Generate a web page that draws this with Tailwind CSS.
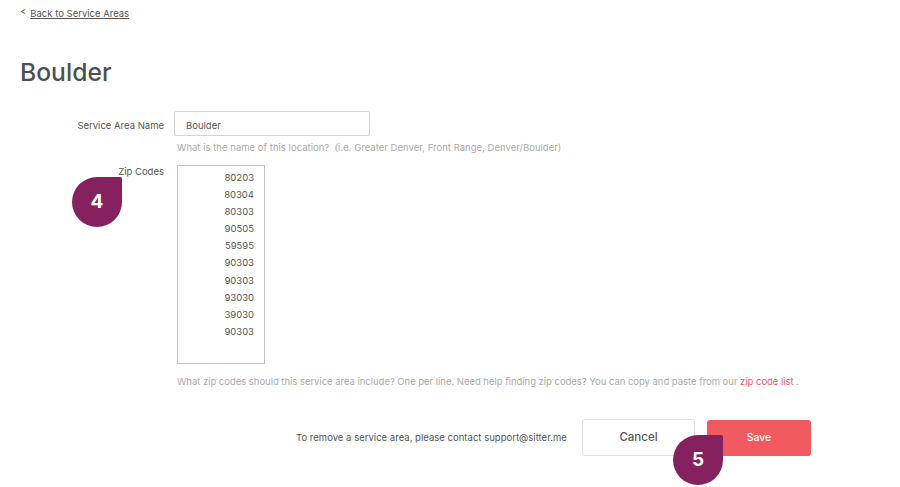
<!DOCTYPE html>
<html>
<head>
<meta charset="utf-8">
<script src="https://cdn.jsdelivr.net/npm/@tailwindcss/browser@4"></script>
</head>
<body class="bg-white">
<div class="relative w-[900px] h-[487px] overflow-hidden font-['Inter',sans-serif] text-[#555555]">
  <div class="flex items-center h-[14px] mt-[7px] ml-5 text-[9.5px] gap-[4px]">
    <span class="-mt-[3px]">&lt;</span>
    <a class="underline">Back to Service Areas</a>
  </div>
  <h1 class="ml-5 mt-[34px] text-[24.7px] leading-[34px] font-medium text-[#4f4f4f]">Boulder</h1>
  <div class="flex mt-[22px]">
    <label class="w-[164px] text-right text-[9.5px] leading-[29px]">Service Area Name</label>
    <div class="ml-[10px]">
      <input value="Boulder" class="block w-[196px] h-[25px] px-[11px] pt-[3px] border border-[#d4d4d4] rounded-[2px] text-[9.5px] text-[#555555] bg-white">
      <p class="ml-[3px] mt-[6px] text-[9.5px] leading-[12px] tracking-[0.02px] text-[#aaaaaa] whitespace-nowrap">What is the name of this location?&nbsp; (i.e. Greater Denver, Front Range, Denver/Boulder)</p>
    </div>
  </div>
  <div class="flex mt-[11px]">
    <label class="w-[164px] text-right text-[9.5px] leading-[14px]">Zip Codes</label>
    <div class="ml-[13px]">
      <textarea class="block w-[88px] h-[199px] resize-none overflow-hidden border border-[#c4c4c4] pt-[3px] pr-[10px] text-right text-[9.5px] leading-[17.1px] text-[#555555]">80203
80304
80303
90505
59595
90303
90303
93030
39030
90303</textarea>
      <p class="mt-[12px] whitespace-nowrap text-[9.5px] leading-[12px] tracking-[-0.03px] text-[#aaaaaa]">What zip codes should this service area include? One per line. Need help finding zip codes? You can copy and paste from our <a class="text-[#f0595f]">zip code list</a> .</p>
    </div>
  </div>
  <div class="flex items-center mt-[32px]">
    <p class="ml-[296px] w-[286px] mt-[1px] text-[9.5px] tracking-[0.02px] whitespace-nowrap">To remove a service area, please contact support@sitter.me</p>
    <button class="w-[113px] h-[37px] border border-[#e2e2e2] rounded-[3px] bg-white text-[11.5px] font-medium text-[#555555] -mt-[1px]">Cancel</button>
    <button class="ml-[12px] w-[104px] h-[36px] rounded-[3px] bg-[#f0595f] text-[10.5px] font-medium text-white">Save</button>
  </div>
  <div class="absolute left-[72px] top-[177px] w-[50px] h-[50px] flex items-center justify-center rounded-[25px] rounded-tr-[2px] bg-[#85215f] text-white text-[19px] font-bold">4</div>
  <div class="absolute left-[673px] top-[435px] w-[50px] h-[50px] flex items-center justify-center rounded-[25px] rounded-tr-[2px] bg-[#85215f] text-white text-[19px] font-bold">5</div>
</div>
</body>
</html>
